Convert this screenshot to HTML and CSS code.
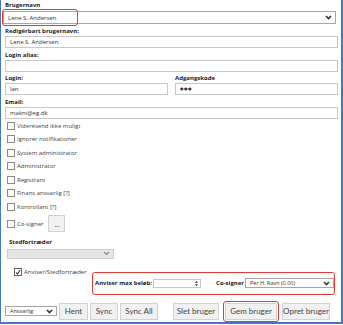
FILE: index.html
```html
<!DOCTYPE html>
<html lang="da">
<head>
    <meta charset="UTF-8">
    <title>Brugeradministration</title>
    <link rel="stylesheet" href="styles.css">
</head>
<body>
    <div class="panel">
        <div class="field first">
            <div class="lbl">Brugernavn</div>
            <div class="mark-wrap">
                <div class="select select-main">
                    <span>Lene S. Andersen</span>
                    <svg class="chev" width="7" height="5" viewBox="0 0 7 5"><path d="M1 1 L3.5 3.5 L6 1" fill="none" stroke="#333" stroke-width="1.6"/></svg>
                </div>
                <div class="mark mark-name"></div>
            </div>
        </div>

        <div class="field">
            <div class="lbl">Redigérbart brugernavn:</div>
            <div class="input">Lene S. Andersen</div>
        </div>

        <div class="field">
            <div class="lbl">Login alias:</div>
            <div class="input"></div>
        </div>

        <div class="field-row">
            <div class="field half">
                <div class="lbl">Login:</div>
                <div class="input">lan</div>
            </div>
            <div class="field half">
                <div class="lbl">Adgangskode</div>
                <div class="input pw">&#9679;&#9679;&#9679;</div>
            </div>
        </div>

        <div class="field">
            <div class="lbl">Email:</div>
            <div class="input">makni@eg.dk</div>
        </div>

        <div class="checks">
            <div class="check"><span class="box"></span>Viderésend ikke muligt</div>
            <div class="check"><span class="box"></span>Ignorér notifikationer</div>
            <div class="check"><span class="box"></span>System administrator</div>
            <div class="check"><span class="box"></span>Administrator</div>
            <div class="check"><span class="box"></span>Registrant</div>
            <div class="check"><span class="box"></span>Finans ansvarlig [?]</div>
            <div class="check"><span class="box"></span>Kontrollant [?]</div>
            <div class="check cosign"><span class="box"></span>Co-signer <span class="btn dots">...</span></div>
        </div>

        <div class="deputy">
            <div class="lbl">Stedfortræder</div>
            <div class="select select-off">
                <span></span>
                <svg class="chev" width="7" height="5" viewBox="0 0 7 5"><path d="M1 1 L3.5 3.5 L6 1" fill="none" stroke="#888" stroke-width="1.2"/></svg>
            </div>
        </div>

        <div class="approver">
            <div class="check checked">
                <span class="box">
                    <svg width="9" height="9" viewBox="0 0 9 9"><path d="M1.5 4.5 L3.6 6.8 L7.8 1.2" fill="none" stroke="#222" stroke-width="1.6"/></svg>
                </span>Anviser/Stedfortræder
            </div>
            <div class="limit-box">
                <span class="lbl-inline">Anviser max beløb:</span>
                <div class="input num">
                    <svg class="spin" width="3" height="7" viewBox="0 0 3 7"><path d="M0 3 L1.5 0.5 L3 3 Z M0 4 L1.5 6.5 L3 4 Z" fill="#666"/></svg>
                </div>
                <span class="lbl-inline cos-lbl">Co-signer</span>
                <div class="select select-cos">
                    <span>Per H. Ravn (0,00)</span>
                    <svg class="chev" width="7" height="5" viewBox="0 0 7 5"><path d="M1 1 L3.5 3.5 L6 1" fill="none" stroke="#333" stroke-width="1.6"/></svg>
                </div>
            </div>
        </div>

        <div class="actions">
            <div class="select select-role">
                <span>Ansvarlig</span>
                <svg class="chev" width="7" height="5" viewBox="0 0 7 5"><path d="M1 1 L3.5 3.5 L6 1" fill="none" stroke="#333" stroke-width="1.6"/></svg>
            </div>
            <span class="btn b-hent">Hent</span>
            <span class="btn b-sync">Sync</span>
            <span class="btn b-syncall">Sync All</span>
            <span class="btn b-slet">Slet bruger</span>
            <span class="btn b-gem">Gem bruger</span>
            <span class="btn b-opret">Opret bruger</span>
        </div>
    </div>
</body>
</html>
```

FILE: styles.css
```css
/* user administration panel */
body {
    margin: 0;
    font-family: "Open Sans", "DejaVu Sans", sans-serif;
    color: #333;
    background: #fff;
}

.panel {
    width: 343px;
    height: 324px;
    box-sizing: border-box;
    border-left: 1px solid #4a78c0;
    border-right: 2px solid #4a78c0;
    border-bottom: 2px solid #4a78c0;
    padding: 0 3px 0 2px;
}

.lbl,
.lbl-inline {
    font-size: 6px;
    font-weight: bold;
    color: #222;
    line-height: 9px;
    white-space: nowrap;
}

.lbl {
    padding-left: 2px;
}

.field {
    margin-top: 3px;
}

.field.first {
    margin-top: 0;
    padding-top: 1px;
}

.field-row {
    display: flex;
    gap: 5px;
    margin-top: 2px;
}

.field-row .field {
    margin-top: 0;
    flex: 1;
}

.input {
    height: 12px;
    box-sizing: border-box;
    border: 1px solid #c8c8c8;
    margin-left: 2px;
    padding-left: 4px;
    font-size: 6px;
    line-height: 10px;
    color: #333;
    background: #fff;
}

.input.pw {
    font-size: 4px;
    letter-spacing: 0.5px;
}

.select {
    display: flex;
    align-items: center;
    justify-content: space-between;
    box-sizing: border-box;
    border: 1px solid #a6a6a6;
    padding: 0 3px 0 4px;
    font-size: 6px;
    background: #fff;
    white-space: nowrap;
}

.select-main {
    margin-top: 1px;
    height: 13px;
    width: 333px;
}

.mark-wrap {
    position: relative;
}

.mark {
    position: absolute;
    border: 1.5px solid #e53935;
    border-radius: 3px;
}

.mark-name {
    left: -1px;
    top: -2px;
    width: 74px;
    height: 15px;
}

/* checkbox list */
.checks {
    margin-top: 0;
    padding-left: 4px;
}

.check {
    display: flex;
    align-items: center;
    height: 13.5px;
    font-size: 6px;
    color: #444;
    white-space: nowrap;
}

.box {
    display: inline-flex;
    width: 8px;
    height: 8px;
    box-sizing: border-box;
    border: 1px solid #8c8c8c;
    background: #fff;
    margin-right: 2px;
    align-items: center;
    justify-content: center;
}

.check.cosign {
    height: 18px;
    margin-top: 1px;
}

.btn {
    display: inline-flex;
    align-items: center;
    justify-content: center;
    box-sizing: border-box;
    height: 17px;
    border: 1px solid #d2d2d2;
    background: #f1f1f1;
    font-family: Lato, "Open Sans", sans-serif;
    font-size: 8px;
    color: #444;
    white-space: nowrap;
}

.btn.dots {
    width: 17px;
    margin-left: 5px;
    font-size: 7px;
}

/* deputy */
.deputy {
    margin-top: 5px;
    padding-left: 4px;
}

.select-off {
    margin-top: 2px;
    width: 107px;
    height: 10px;
    background: #e6e6e6;
    border-color: #cdcdcd;
}

.approver {
    display: flex;
    align-items: flex-start;
}

.check.checked {
    flex-shrink: 0;
    margin-top: 7px;
    padding-left: 11px;
    width: 77px;
}

.check.checked .box {
    border-color: #666;
}

.limit-box {
    flex-shrink: 0;
    display: flex;
    align-items: center;
    margin-top: 13px;
    margin-left: 1px;
    width: 243px;
    height: 23px;
    box-sizing: border-box;
    border: 1.5px solid #e53935;
    border-radius: 3px;
    padding-left: 2px;
}

.input.num {
    margin-left: 1px;
    width: 49px;
    height: 9px;
    display: flex;
    justify-content: flex-end;
    align-items: center;
    padding-right: 2px;
}

.cos-lbl {
    margin-left: 15px;
}

.select-cos {
    margin-left: 1px;
    width: 91px;
    height: 10px;
    font-size: 5.5px;
}

/* bottom actions */
.actions {
    display: flex;
    align-items: center;
    margin-top: 8px;
    padding-left: 2px;
}

.select-role {
    width: 52px;
    height: 10px;
    font-size: 5.5px;
}

.b-hent {
    width: 29px;
    margin-left: 2px;
}

.b-sync {
    width: 28px;
    margin-left: 2px;
}

.b-syncall {
    width: 38px;
    margin-left: 2px;
}

.b-slet {
    width: 46px;
    margin-left: 15px;
}

.b-gem {
    width: 52px;
    margin-left: 6px;
    outline: 1.5px solid #e53935;
    outline-offset: 1px;
    border-radius: 1px;
}

.b-opret {
    width: 48px;
    margin-left: 5px;
}
```
